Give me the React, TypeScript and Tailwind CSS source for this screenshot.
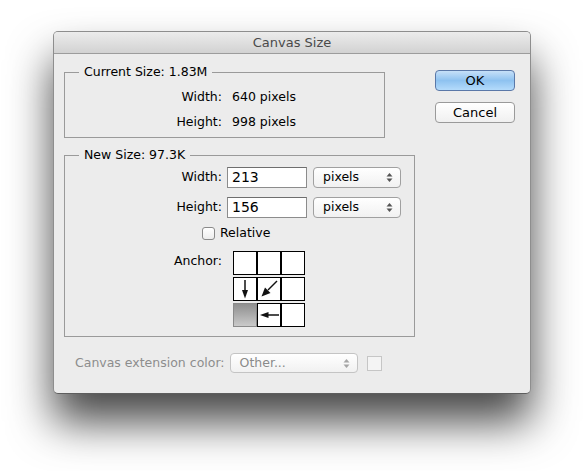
import React from "react";

function UpDown() {
  return (
    <svg width="7" height="11" viewBox="0 0 7 11" className="shrink-0">
      <path d="M3.5 1 L6.5 4.5 L0.5 4.5 Z" fill="#555" />
      <path d="M3.5 10 L6.5 6.5 L0.5 6.5 Z" fill="#555" />
    </svg>
  );
}

function Select({ label, className, disabled }: { label: string; className: string; disabled?: boolean }) {
  return (
    <div
      className={`flex items-center justify-between rounded-[4px] border bg-gradient-to-b from-white to-[#f1f1f1] pl-[9px] pr-[7px] ${
        disabled ? "border-[#c4c4c4] text-[#8a8a8a]" : "border-[#a0a0a0] text-black"
      } ${className}`}
    >
      <span>{label}</span>
      <span className={disabled ? "opacity-50" : ""}>
        <UpDown />
      </span>
    </div>
  );
}

function Cell({ children, selected }: { children?: React.ReactNode; selected?: boolean }) {
  return (
    <div
      className={`w-[24px] h-[24px] border flex items-center justify-center ${
        selected ? "border-[#8a8a8a] bg-gradient-to-b from-[#8f8f8f] to-[#cacaca]" : "border-black bg-white"
      }`}
    >
      {children}
    </div>
  );
}

const arrowDown = (
  <svg width="22" height="22" viewBox="0 0 22 22">
    <line x1="11" y1="2" x2="11" y2="13" stroke="#111" strokeWidth="1.5" />
    <path d="M8 12 L14 12 L11 20.5 Z" fill="#111" />
  </svg>
);

const arrowDiag = (
  <svg width="22" height="22" viewBox="0 0 22 22">
    <line x1="19" y1="3" x2="10" y2="12" stroke="#111" strokeWidth="1.5" />
    <path d="M7 9.5 L12.5 15 L3.5 18.5 Z" fill="#111" />
  </svg>
);

const arrowLeft = (
  <svg width="22" height="22" viewBox="0 0 22 22">
    <line x1="21" y1="11" x2="10" y2="11" stroke="#111" strokeWidth="1.5" />
    <path d="M10.5 8 L10.5 14 L2 11 Z" fill="#111" />
  </svg>
);

export default function App() {
  return (
    <div className="min-h-screen bg-white pt-[31px] pl-[53px] font-['DejaVu_Sans',sans-serif] text-[12.5px] text-black">
      <div className="w-[478px] h-[363px] rounded-[5px] border border-[#8e8e8e] border-b-[#5e5e5e] bg-[#ececec] shadow-[0_28px_44px_rgba(0,0,0,0.72)] overflow-hidden flex flex-col">
        {/* title bar */}
        <div className="h-[22px] shrink-0 bg-gradient-to-b from-[#ececec] to-[#d2d2d2] border-b border-[#9c9c9c] text-center leading-[21px] text-[#4a4a4a] text-[13px]">
          Canvas Size
        </div>

        <div className="flex pl-[10px]">
          <div className="w-[351px] flex flex-col">
            {/* Current size */}
            <fieldset className="mt-[10px] w-[321px] h-[74px] border border-[#9a9a9a]">
              <legend className="ml-[14px] px-[5px] leading-[16px]">Current Size: 1.83M</legend>
              <div className="mt-[4px] grid grid-cols-[157px_auto] gap-x-[10px]">
                <div className="text-right leading-[25px]">Width:</div>
                <div className="leading-[25px]">640 pixels</div>
                <div className="text-right leading-[25px]">Height:</div>
                <div className="leading-[25px]">998 pixels</div>
              </div>
            </fieldset>

            {/* New size */}
            <fieldset className="mt-[9px] w-[351px] h-[190px] border border-[#9a9a9a]">
              <legend className="ml-[14px] px-[5px] leading-[16px]">New Size: 97.3K</legend>
              <div className="mt-[4px] flex flex-col gap-[9px]">
                <div className="flex items-center h-[21px]">
                  <div className="w-[157px] text-right">Width:</div>
                  <div className="ml-[5px] w-[80px] h-[21px] border border-[#8c8c8c] border-t-[#6e6e6e] bg-white pl-[4px] leading-[19px] text-[14px]">
                    213
                  </div>
                  <Select label="pixels" className="ml-[6px] w-[88px] h-[21px]" />
                </div>
                <div className="flex items-center h-[21px]">
                  <div className="w-[157px] text-right">Height:</div>
                  <div className="ml-[5px] w-[80px] h-[21px] border border-[#8c8c8c] border-t-[#6e6e6e] bg-white pl-[4px] leading-[19px] text-[14px]">
                    156
                  </div>
                  <Select label="pixels" className="ml-[6px] w-[88px] h-[21px]" />
                </div>
              </div>
              <div className="mt-[7px] flex items-center h-[16px] pl-[137px]">
                <div className="w-[13px] h-[13px] rounded-[3px] border border-[#8a8a8a] bg-gradient-to-b from-white to-[#ededed]" />
                <span className="ml-[5px]">Relative</span>
              </div>
              <div className="mt-[10px] flex">
                <div className="w-[157px] text-right pt-[1px]">Anchor:</div>
                <div className="ml-[11px] flex flex-col gap-[2px]">
                  <div className="flex">
                    <Cell />
                    <Cell />
                    <Cell />
                  </div>
                  <div className="flex">
                    <Cell>{arrowDown}</Cell>
                    <Cell>{arrowDiag}</Cell>
                    <Cell />
                  </div>
                  <div className="flex">
                    <Cell selected />
                    <Cell>{arrowLeft}</Cell>
                    <Cell />
                  </div>
                </div>
              </div>
            </fieldset>

            {/* extension color */}
            <div className="mt-[16px] flex items-center pl-[11px] text-[#8d8d8d]">
              <span>Canvas extension color:</span>
              <Select label="Other..." disabled className="ml-[5px] w-[128px] h-[20px] text-[#7a7a7a]" />
              <div className="ml-[9px] w-[15px] h-[15px] border border-[#c6c6c6] bg-[#f4f4f4]" />
            </div>
          </div>

          {/* buttons */}
          <div className="ml-[20px] mt-[16px] flex flex-col gap-[11px]">
            <button className="w-[80px] h-[21px] rounded-[4px] border border-[#5a78a8] bg-gradient-to-b from-[#c6e0f8] via-[#8ec2f0] to-[#b4dbfb] text-black text-[13px] leading-[19px]">
              OK
            </button>
            <button className="w-[80px] h-[21px] rounded-[4px] border border-[#9a9a9a] bg-gradient-to-b from-white to-[#f0f0f0] text-black text-[13px] leading-[19px]">
              Cancel
            </button>
          </div>
        </div>
      </div>
    </div>
  );
}
